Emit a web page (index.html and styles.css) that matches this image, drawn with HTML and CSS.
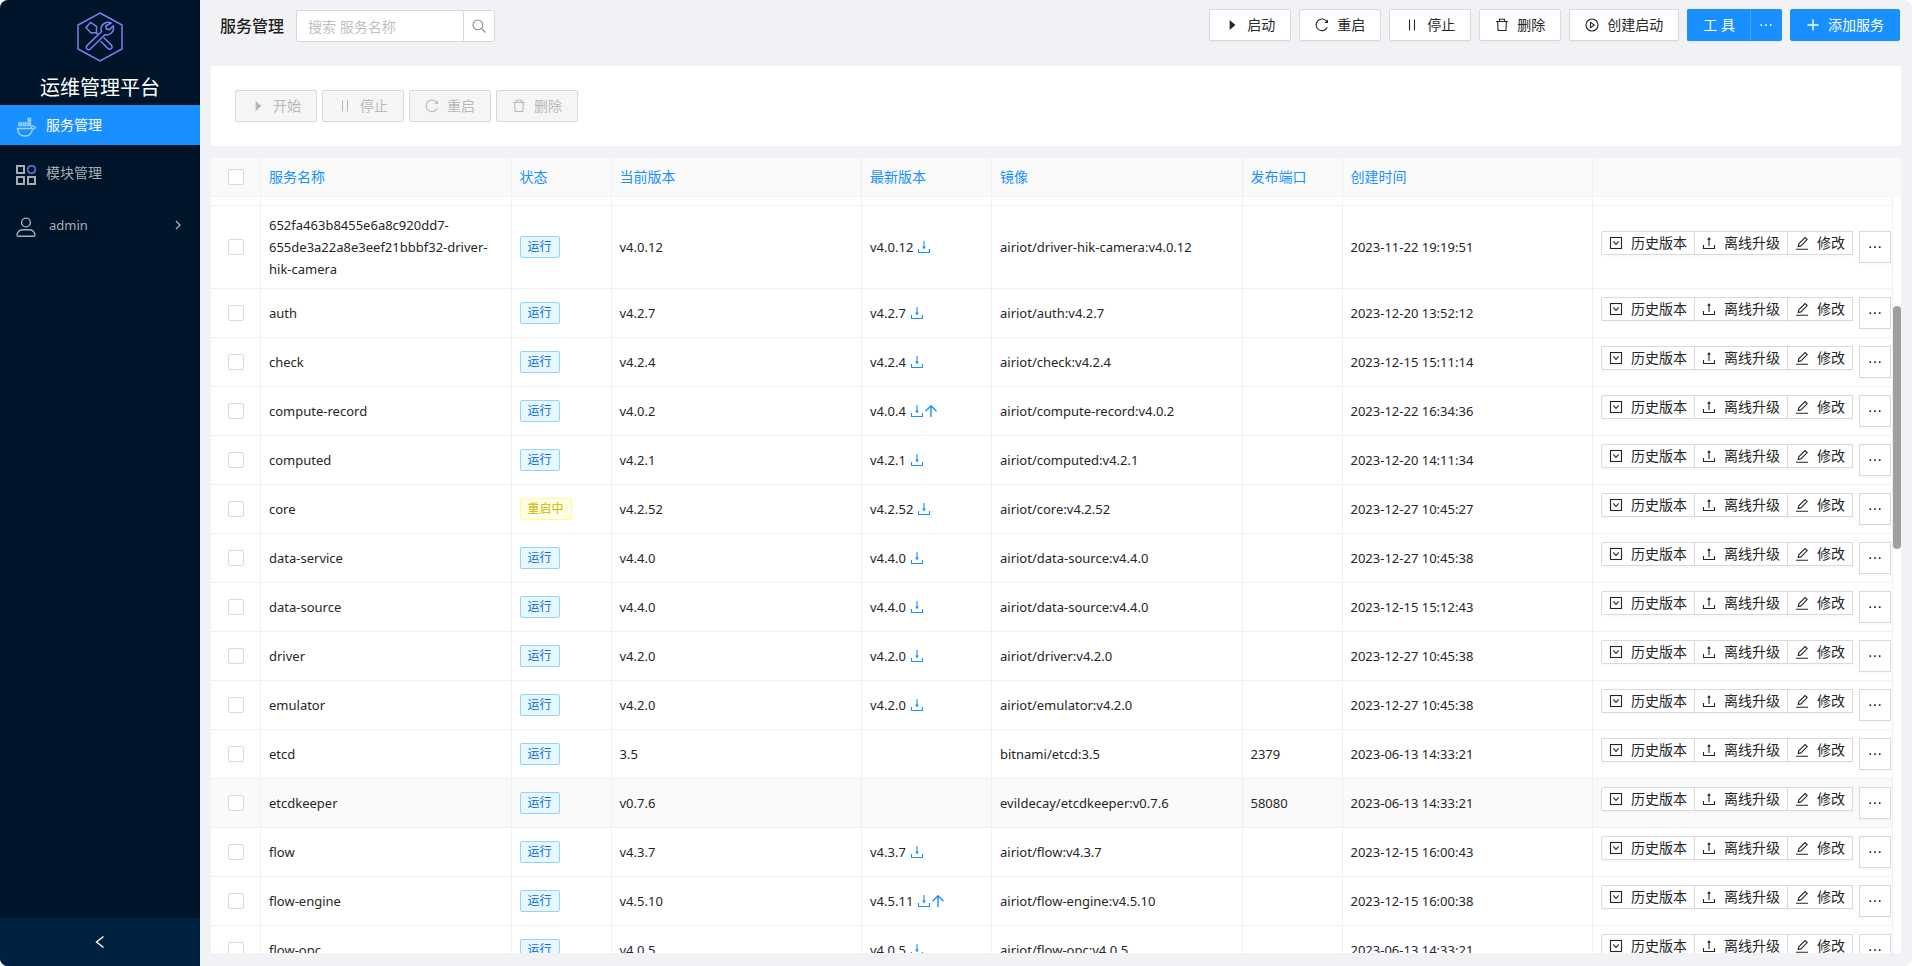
FILE: index.html
```html
<!DOCTYPE html>
<html lang="zh-CN">
<head>
<meta charset="utf-8">
<title>运维管理平台</title>
<link rel="stylesheet" href="styles.css">
</head>
<body>
<svg class="sprite" aria-hidden="true">
  <symbol id="i-caret" viewBox="0 0 14 14"><path d="M4.600 2 10.400 7l-5.800 5z" fill="currentColor"/></symbol>
  <symbol id="i-pause" viewBox="0 0 14 14"><path d="M4.500 1.500v11M9.500 1.500v11" class="s"/></symbol>
  <symbol id="i-reload" viewBox="0 0 14 14"><path d="M12.2 9.3A5.8 5.8 0 1 1 11.6 3.4" class="s"/><path d="M13 1.4v3.7H9.4z" fill="currentColor"/></symbol>
  <symbol id="i-trash" viewBox="0 0 14 14"><path d="M1 3.5h12M4.4 3.3V1.3h5.2v2M2.6 3.5l.5 9h7.8l.5-9" class="s"/></symbol>
  <symbol id="i-play" viewBox="0 0 14 14"><circle cx="7" cy="7" r="6" class="s"/><path d="M5.5 4.4 9.3 7 5.5 9.6z" class="s"/></symbol>
  <symbol id="i-plus" viewBox="0 0 14 14"><path d="M7 1.5v11M1.5 7h11" class="s bold"/></symbol>
  <symbol id="i-dots" viewBox="0 0 14 14"><path d="M1.5 6.3h1.6v1.6H1.5zM6.2 6.3h1.6v1.6H6.2zM10.9 6.3h1.6v1.6h-1.6z" fill="currentColor"/></symbol>
  <symbol id="i-search" viewBox="0 0 14 14"><circle cx="5.9" cy="5.9" r="4.9" class="s"/><path d="m9.4 9.4 4.1 4.1" class="s"/></symbol>
  <symbol id="i-down" viewBox="0 0 14 14"><rect x="1.5" y="1.5" width="11" height="11" class="s"/><path d="m4.3 5.4 2.7 3 2.7-3" class="s"/></symbol>
  <symbol id="i-upload" viewBox="0 0 14 14"><path d="M1.5 9v3.500h11V9M7 10V3" class="s"/><path d="M7 1 8.900 3.800H5.100z" fill="currentColor"/></symbol>
  <symbol id="i-download" viewBox="0 0 14 14"><path d="M1.5 9v3.500h11V9M7 1v6" class="s"/><path d="M7 9.4 8.900 6.600H5.100z" fill="currentColor"/></symbol>
  <symbol id="i-up" viewBox="0 0 14 14"><path d="M7 13V2M1.5 7.2 7 1.7l5.5 5.5" class="s bold"/></symbol>
  <symbol id="i-edit" viewBox="0 0 14 14"><path d="M1 13.2h12M3.2 10.5l.6-2.7 6.3-6.3 2.1 2.1-6.3 6.3z" class="s"/></symbol>
</svg>
<div class="app">
  <aside class="side">
    <div class="brand">
      <svg class="logo" viewBox="0 0 46 50" aria-hidden="true">
        <path d="M23 1 45 13v24L23 49 1 37V13z"/>
        <path d="M9 15.500 13.500 10.500l6 4v6l-5.500.500zM19 20.500l2.500 2.500M34 11a7 7 0 0 0-9.600 8.600L10 33.600a2.300 2.300 0 0 0 3.400 3.400L27.800 22.800A7 7 0 0 0 36.200 14l-3.800 3.600-3-.6-.6-3zM23.500 29l7.500 7.500a2.300 2.300 0 0 0 3.400-3.400l-7.800-7.600"/>
      </svg>
      <div class="brand-name">运维管理平台</div>
    </div>
    <nav class="menu">
      <a class="item active" href="#services">
        <svg viewBox="0 0 20 20" aria-hidden="true"><path d="M1.500 11.500h13.500q1-3 2-2.500l2.500 1.500q-1.500 1.500-3 1.500-1 7-7.500 7-7 0-7.500-7.500z" class="s bold"/><path d="M3 6h2.500v2.500H3zM7.500 6H10v2.500H7.500zM12 6h2.500v2.500H12zM12 1.500h2.500V4H12z" class="s bold"/></svg>
        <span>服务管理</span></a>
      <a class="item" href="#modules">
        <svg viewBox="0 0 20 20" aria-hidden="true"><path d="M1 1h7v7H1zM1 12h7v7H1zM12 12h7v7h-7z" class="s thick"/><circle cx="15.500" cy="4.500" r="3.800" class="accent"/></svg>
        <span>模块管理</span></a>
      <a class="item user" href="#admin">
        <svg viewBox="0 0 20 20" aria-hidden="true"><circle cx="10" cy="5.500" r="4.400" class="s bold"/><path d="M2.500 19.200q-1.500 0-1.500-1.500Q2 12.700 7 12.700h6q5 0 6 5 0 1.500-1.500 1.500z" class="s bold"/></svg>
        <span class="latin">admin</span>
        <svg class="arrow" viewBox="0 0 8 10" aria-hidden="true"><path d="m2 1 4 4-4 4" class="s bold"/></svg></a>
    </nav>
    <button class="collapse" aria-label="收起"><svg viewBox="0 0 10 14" aria-hidden="true"><path d="M8.500 1.500 1.500 7l7 5.500" class="s bold"/></svg></button>
  </aside>
  <div class="main">
    <header class="top">
      <h1>服务管理</h1>
      <form class="search">
        <input type="text" placeholder="搜索 服务名称" aria-label="搜索 服务名称">
        <button type="button" aria-label="搜索"><svg><use href="#i-search"/></svg></button>
      </form>
      <div class="actions">
        <button class="btn"><svg><use href="#i-caret"/></svg>启动</button>
        <button class="btn"><svg><use href="#i-reload"/></svg>重启</button>
        <button class="btn"><svg><use href="#i-pause"/></svg>停止</button>
        <button class="btn"><svg><use href="#i-trash"/></svg>删除</button>
        <button class="btn"><svg><use href="#i-play"/></svg>创建启动</button>
        <div class="split"><button class="btn primary">工 具</button><button class="btn primary more" aria-label="更多工具"><svg><use href="#i-dots"/></svg></button></div>
        <button class="btn primary"><svg><use href="#i-plus"/></svg>添加服务</button>
      </div>
    </header>
    <section class="bulk">
      <button class="btn" disabled><svg><use href="#i-caret"/></svg>开始</button>
      <button class="btn" disabled><svg><use href="#i-pause"/></svg>停止</button>
      <button class="btn" disabled><svg><use href="#i-reload"/></svg>重启</button>
      <button class="btn" disabled><svg><use href="#i-trash"/></svg>删除</button>
    </section>
    <section class="list">
      <div class="viewport">
        <table>
          <colgroup><col class="c-check"><col><col class="c-s"><col><col class="c-m"><col><col class="c-s"><col><col class="c-ops"></colgroup>
          <thead><tr><th><input type="checkbox" aria-label="全选"></th><th>服务名称</th><th>状态</th><th>当前版本</th><th>最新版本</th><th>镜像</th><th>发布端口</th><th>创建时间</th><th></th></tr></thead>
          <tbody id="rows"><tr class="peek"><td></td><td></td><td></td><td></td><td></td><td></td><td></td><td></td><td></td></tr></tbody>
        </table>
      </div>
      <div class="gutter"><div class="track"><div class="thumb"></div></div></div>
    </section>
  </div>
</div>
<script src="rows.js"></script>
</body>
</html>
```
FILE: styles.css
```css
* { box-sizing: border-box; }
body {
  margin: 0;
  background: #fff;
  color: #262626;
  font: 14px/22px "Noto Sans", "Noto Sans CJK SC", sans-serif;
}
button, input { font: inherit; color: inherit; margin: 0; }
svg { width: 14px; height: 14px; flex: none; }
.sprite { display: none; }
.s { fill: none; stroke: currentColor; stroke-width: 1.1; }
.bold { stroke-width: 1.4; }
.thick { stroke-width: 2; }
.app { display: flex; height: 100vh; border-radius: 8px; overflow: hidden; background: #f0f2f5; }

.side { width: 200px; flex: none; display: flex; flex-direction: column; background: #001529; }
.brand { height: 105px; padding-top: 12px; text-align: center; color: #fff; font-size: 20px; line-height: 28px; }
.logo { width: 46px; height: 50px; display: block; margin: 0 auto 12px; fill: none; stroke: #7284f0; stroke-width: 1.5; }
.menu { flex: 1; }
.item { display: flex; align-items: center; height: 40px; margin-bottom: 8px; padding: 0 16px; gap: 10px; color: #a6adb4; text-decoration: none; }
.item svg { width: 20px; height: 20px; margin-top: 3px; }
.item.active { background: #1890ff; color: #fff; }
.item.active svg { color: #a3d3ff; }
.item.user { margin-top: 12px; gap: 13px; padding-right: 18px; }
.item .arrow { width: 8px; height: 10px; margin: 0 0 0 auto; }
.accent { fill: none; stroke: #5468c0; stroke-width: 2; }
.latin { font-size: 13px; }
.collapse { height: 48px; border: 0; background: #002140; color: #fff; display: flex; align-items: center; justify-content: center; }
.collapse svg { width: 10px; height: 14px; }

.main { flex: 1; min-width: 0; display: flex; flex-direction: column; padding: 0 11px 13px 11px; }
.top { display: flex; align-items: flex-start; height: 55px; padding: 9px 1px 0 9px; border-bottom: 1px solid #edeff2; margin-bottom: 11px; }
.top h1 { margin: 0 12px 0 0; font-size: 16px; line-height: 34px; font-weight: 500; color: #1f1f1f; }
.search { display: flex; margin-top: 1px; }
.search input { width: 168px; height: 32px; border: 1px solid #d9d9d9; border-radius: 2px 0 0 2px; padding: 0 11px; background: #fff; }
.search input::placeholder { color: #bfbfbf; }
.search button { width: 32px; height: 32px; margin-left: -1px; padding: 0; border: 1px solid #d9d9d9; border-radius: 0 2px 2px 0; background: #fff; color: #8c8c8c; display: flex; align-items: center; justify-content: center; }
.actions { display: flex; gap: 8px; margin-left: auto; }
.btn { display: flex; align-items: center; justify-content: center; gap: 8px; height: 32px; padding: 0 15px; border: 1px solid #d9d9d9; border-radius: 2px; background: #fff; box-shadow: 0 2px 0 rgba(0, 0, 0, .02); white-space: nowrap; }
.btn.primary { background: #1890ff; border-color: #1890ff; color: #fff; }
.split { display: flex; }
.split .btn:first-child { border-radius: 2px 0 0 2px; border-right-color: #40a9ff; }
.split .more { width: 32px; margin-left: -1px; padding: 0; border-radius: 0 2px 2px 0; border-left-color: #40a9ff; }
.btn:disabled { background: #f5f5f5; color: #b8b8b8; box-shadow: none; }
.bulk { display: flex; gap: 5px; padding: 24px; background: #fff; margin-bottom: 12px; }

.list { flex: 1; min-height: 0; display: flex; background: #fff; }
.viewport { flex: 1; min-width: 0; overflow: hidden; }
.gutter { width: 8px; display: flex; flex-direction: column; padding-top: 39px; background: #fafafa; }
.track { flex: 1; padding-top: 109px; background: #fff; }
.thumb { height: 243px; border-radius: 4px; background: #9f9f9f; }
table { width: 100%; table-layout: fixed; border-collapse: separate; border-spacing: 0; }
.c-check { width: 50px; }
.c-s { width: 100px; }
.c-m { width: 130px; }
.c-ops { width: 300px; }
th, td { border: solid #f0f0f0; border-width: 0 1px 1px 0; padding: 8px; text-align: left; }
th { background: #fafafa; color: #1890ff; font-weight: 400; height: 39px; }
th:last-child { border-right-color: #fafafa; }
td { font-size: 13px; height: 49px; overflow-wrap: anywhere; }
th:first-child, td:first-child { text-align: center; padding: 0; }
.peek td { height: 9px; padding: 0; }
.hover td { background: #fafafa; }
td:last-child { padding-right: 0; }
input[type="checkbox"] { appearance: none; display: block; width: 16px; height: 16px; margin: 0 auto; border: 1px solid #d9d9d9; border-radius: 2px; background: #fff; }
.tag { display: inline-block; height: 22px; padding: 0 7px; border: 1px solid #91d5ff; border-radius: 2px; background: #e6f7ff; color: #096dd9; font-size: 12px; line-height: 20px; vertical-align: top; }
.tag.busy { border-color: #fffb8f; background: #feffe6; color: #d4b106; }
.ver { display: flex; align-items: center; }
.ver a { display: flex; color: #1890ff; }
.ver a:first-of-type { margin-left: 4px; }
.ops { display: flex; align-items: flex-start; gap: 6px; }
.group { display: flex; }
.group .btn { height: 24px; padding: 0 7px; font-size: 14px; border-radius: 0; }
.group .btn + .btn { margin-left: -1px; }
.group .btn:first-child { border-radius: 2px 0 0 2px; }
.ops .more { width: 32px; padding: 0; border-radius: 0; }
```
FILE: rows.js
```js
const services = [
  ["652fa463b8455e6a8c920dd7-655de3a22a8e3eef21bbbf32-driver-hik-camera", "v4.0.12", "v4.0.12", "airiot/driver-hik-camera:v4.0.12", "", "2023-11-22 19:19:51"],
  ["auth", "v4.2.7", "v4.2.7", "airiot/auth:v4.2.7", "", "2023-12-20 13:52:12"],
  ["check", "v4.2.4", "v4.2.4", "airiot/check:v4.2.4", "", "2023-12-15 15:11:14"],
  ["compute-record", "v4.0.2", "v4.0.4", "airiot/compute-record:v4.0.2", "", "2023-12-22 16:34:36"],
  ["computed", "v4.2.1", "v4.2.1", "airiot/computed:v4.2.1", "", "2023-12-20 14:11:34"],
  ["core", "v4.2.52", "v4.2.52", "airiot/core:v4.2.52", "", "2023-12-27 10:45:27"],
  ["data-service", "v4.4.0", "v4.4.0", "airiot/data-source:v4.4.0", "", "2023-12-27 10:45:38"],
  ["data-source", "v4.4.0", "v4.4.0", "airiot/data-source:v4.4.0", "", "2023-12-15 15:12:43"],
  ["driver", "v4.2.0", "v4.2.0", "airiot/driver:v4.2.0", "", "2023-12-27 10:45:38"],
  ["emulator", "v4.2.0", "v4.2.0", "airiot/emulator:v4.2.0", "", "2023-12-27 10:45:38"],
  ["etcd", "3.5", "", "bitnami/etcd:3.5", "2379", "2023-06-13 14:33:21"],
  ["etcdkeeper", "v0.7.6", "", "evildecay/etcdkeeper:v0.7.6", "58080", "2023-06-13 14:33:21"],
  ["flow", "v4.3.7", "v4.3.7", "airiot/flow:v4.3.7", "", "2023-12-15 16:00:43"],
  ["flow-engine", "v4.5.10", "v4.5.11", "airiot/flow-engine:v4.5.10", "", "2023-12-15 16:00:38"],
  ["flow-opc", "v4.0.5", "v4.0.5", "airiot/flow-opc:v4.0.5", "", "2023-06-13 14:33:21"]
];
const icon = (name) => `<svg aria-hidden="true"><use href="#i-${name}"/></svg>`;
const link = (name, label) => `<a href="#${name}" aria-label="${label}">${icon(name)}</a>`;
const row = ([name, current, latest, image, port, created]) => `
<tr class="${name === "etcdkeeper" ? "hover" : ""}">
<td><input type="checkbox" aria-label="选择 ${name}"></td>
<td>${name}</td>
<td>${name === "core" ? '<span class="tag busy">重启中</span>' : '<span class="tag">运行</span>'}</td>
<td>${current}</td>
<td>${latest ? `<div class="ver">${latest}${link("download", "下载")}${latest !== current ? link("up", "升级") : ""}</div>` : ""}</td>
<td>${image}</td><td>${port}</td><td>${created}</td>
<td><div class="ops"><div class="group">
<button class="btn">${icon("down")}历史版本</button><button class="btn">${icon("upload")}离线升级</button><button class="btn">${icon("edit")}修改</button>
</div><button class="btn more" aria-label="更多">${icon("dots")}</button></div></td></tr>`;
document.getElementById("rows").insertAdjacentHTML("beforeend", services.map(row).join(""));
```
